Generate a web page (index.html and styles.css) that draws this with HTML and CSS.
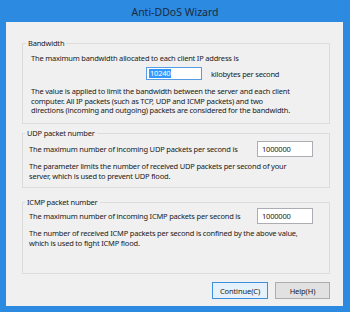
FILE: index.html
```html
<!DOCTYPE html>
<html lang="en">
<head>
  <meta charset="UTF-8">
  <title>Anti-DDoS Wizard</title>
  <link rel="stylesheet" href="styles.css">
</head>
<body>
  <div class="titlebar">Anti-DDoS Wizard</div>
  <div class="client">
    <fieldset class="group group-bw">
      <legend>Bandwidth</legend>
      <p class="line">The maximum bandwidth allocated to each client IP address is</p>
      <div class="value-row">
        <span class="textbox focused"><span class="sel">10240</span></span>
        <span class="unit">kilobytes per second</span>
      </div>
      <p class="note">The value is applied to limit the bandwidth between the server and each client<br>computer. All IP packets (such as TCP, UDP and ICMP packets) and two<br>directions (incoming and outgoing) packets are considered for the bandwidth.</p>
    </fieldset>

    <fieldset class="group group-udp">
      <legend>UDP packet number</legend>
      <div class="input-row">
        <span>The maximum number of incoming UDP packets per second is</span>
        <span class="textbox">1000000</span>
      </div>
      <p class="note">The parameter limits the number of received UDP packets per second of your<br>server, which is used to prevent UDP flood.</p>
    </fieldset>

    <fieldset class="group group-icmp">
      <legend>ICMP packet number</legend>
      <div class="input-row">
        <span>The maximum number of incoming ICMP packets per second is</span>
        <span class="textbox">1000000</span>
      </div>
      <p class="note">The number of received ICMP packets per second is confined by the above value,<br>which is used to fight ICMP flood.</p>
    </fieldset>

    <div class="buttons">
      <button class="btn default">Continue(C)</button>
      <button class="btn">Help(H)</button>
    </div>
  </div>
</body>
</html>
```

FILE: styles.css
```css
* {
  box-sizing: border-box;
}
body {
  margin: 0;
  width: 350px;
  height: 312px;
  overflow: hidden;
  background: #2c8ae0;
  font-family: 'Noto Sans', sans-serif;
  font-size: 7.5px;
  letter-spacing: -0.2px;
  color: #1a1a1a;
}
.titlebar {
  height: 22px;
  padding-top: 1px;
  display: flex;
  align-items: center;
  justify-content: center;
  font-size: 10.5px;
  letter-spacing: 0;
  color: #1c2a3c;
}
.client {
  margin: 0 7px 0 6px;
  height: 284px;
  background: #f0f0f0;
  padding: 16px 13px 0 16px;
  display: flex;
  flex-direction: column;
}
.group {
  margin: 0;
  border: 1px solid #dcdcdc;
  min-width: 0;
  white-space: nowrap;
}
.group legend {
  padding: 0 2px;
  margin-left: -4px;
  line-height: 10px;
}
.group p {
  margin: 0;
}
.line {
  line-height: 10px;
}
.note {
  line-height: 9.5px;
  margin-top: 5px !important;
}

.group-bw {
  padding: 5px 8px 7.5px;
}
.group-bw legend {
  margin-left: -5px;
}
.group-bw .note {
  margin-top: 7px !important;
}
.group-udp {
  margin-top: 4px;
  padding: 3px 16px 6px 6px;
}
.group-icmp {
  margin-top: 9px;
  padding: 1px 16px 25px 6px;
}

.value-row {
  display: flex;
  align-items: center;
  margin: 4px 0 0 115px;
  height: 13px;
}
.input-row {
  display: flex;
  align-items: center;
  height: 16px;
}
.textbox {
  display: flex;
  align-items: center;
  width: 56px;
  height: 16px;
  margin-left: auto;
  padding-left: 4px;
  background: white;
  border: 1px solid #abadb3;
}
.textbox.focused {
  height: 13px;
  margin-left: 0;
  padding-left: 2px;
  border-color: #569de5;
}
.sel {
  background: #3399ff;
  color: white;
  line-height: 9px;
  padding: 0 1px;
}
.unit {
  margin-left: 9px;
}

.buttons {
  display: flex;
  justify-content: flex-end;
  gap: 7px;
  margin-top: 8px;
}
.btn {
  height: 17px;
  width: 55px;
  padding: 0;
  font-family: inherit;
  font-size: 7.5px;
  letter-spacing: -0.1px;
  color: #1a1a1a;
  background: #e1e1e1;
  border: 1px solid #adadad;
}
.btn.default {
  width: 56px;
  background: #e5f1fb;
  border-color: #3c8fdc;
}
```
